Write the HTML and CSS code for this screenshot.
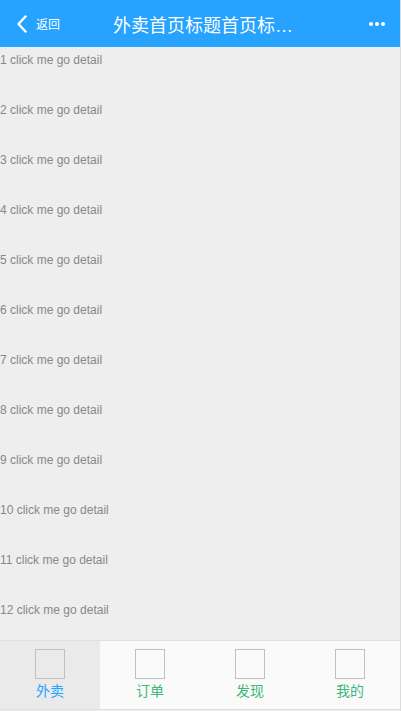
FILE: index.html
```html
<!DOCTYPE html>
<html>
<head>
<meta charset="utf-8">
<link rel="stylesheet" href="styles.css">
</head>
<body>
<div class="app">
  <header class="header">
    <div class="back">
      <svg class="back-icon" width="12" height="18" viewBox="0 0 12 18"><path d="M9.5 1.5 L2.5 9 L9.5 16.5" fill="none" stroke="#fff" stroke-width="2.4" stroke-linecap="round" stroke-linejoin="round"/></svg>
      <span class="back-text">返回</span>
    </div>
    <h1 class="title">外卖首页标题首页标题首页标题</h1>
    <div class="more"><span class="dot"></span><span class="dot"></span><span class="dot"></span></div>
  </header>
  <main class="list">
    <div class="item">1 click me go detail</div>
    <div class="item">2 click me go detail</div>
    <div class="item">3 click me go detail</div>
    <div class="item">4 click me go detail</div>
    <div class="item">5 click me go detail</div>
    <div class="item">6 click me go detail</div>
    <div class="item">7 click me go detail</div>
    <div class="item">8 click me go detail</div>
    <div class="item">9 click me go detail</div>
    <div class="item">10 click me go detail</div>
    <div class="item">11 click me go detail</div>
    <div class="item">12 click me go detail</div>
  </main>
  <nav class="tabbar">
    <div class="tab active"><span class="tab-icon"></span><span class="tab-label">外卖</span></div>
    <div class="tab"><span class="tab-icon"></span><span class="tab-label">订单</span></div>
    <div class="tab"><span class="tab-icon"></span><span class="tab-label">发现</span></div>
    <div class="tab"><span class="tab-icon"></span><span class="tab-label">我的</span></div>
  </nav>
</div>
</body>
</html>
```
FILE: styles.css
```css
html, body {
  margin: 0;
  padding: 0;
  background: #eeeeee;
}
body {
  font-family: "Liberation Sans", Arial, "Noto Sans CJK SC", sans-serif;
  width: 401px;
  height: 711px;
  overflow: hidden;
}
.app {
  width: 400px;
  height: 711px;
  border-right: 1px solid #dcdcdc;
  display: flex;
  flex-direction: column;
  background: #eeeeee;
}
.header {
  height: 47px;
  flex: none;
  background: #26a2ff;
  color: #fff;
  display: flex;
  align-items: center;
  padding: 0 15px 0 16px;
  box-sizing: border-box;
}
.back {
  display: flex;
  align-items: center;
  width: 80px;
  flex: none;
}
.back-icon {
  display: block;
  margin-right: 8px;
}
.back-text {
  font-size: 12px;
  font-family: "Noto Sans CJK SC", sans-serif;
}
.title {
  flex: none;
  width: 182px;
  margin: 0 0 0 17px;
  padding: 0;
  font-weight: normal;
  font-size: 18px;
  font-family: "Liberation Sans", "Noto Sans CJK SC", sans-serif;
  white-space: nowrap;
  overflow: hidden;
  text-overflow: ellipsis;
  text-align: left;
}
.more {
  flex: 1;
  display: flex;
  justify-content: flex-end;
  gap: 2px;
}
.dot {
  width: 4px;
  height: 4px;
  border-radius: 50%;
  background: #fff;
}
.list {
  flex: 1;
  overflow: hidden;
}
.item {
  height: 50px;
  line-height: 26px;
  font-size: 12px;
  color: #888;
}
.tabbar {
  flex: none;
  height: 70px;
  border-top: 1px solid #dedede;
  border-bottom: 1px solid #dedede;
  background: #fafafa;
  display: flex;
  box-sizing: border-box;
  margin-bottom: 1px;
}
.tab {
  flex: 1;
  display: flex;
  flex-direction: column;
  align-items: center;
  padding-top: 8px;
  box-sizing: border-box;
}
.tab.active {
  background: #eaeaea;
}
.tab-icon {
  width: 28px;
  height: 28px;
  border: 1px solid #c0c0c0;
  display: block;
}
.tab-label {
  margin-top: 1px;
  font-size: 14px;
  line-height: 20px;
  color: #3cb878;
  font-family: "Noto Sans CJK SC", sans-serif;
}
.tab.active .tab-label {
  color: #26a2ff;
}
```
